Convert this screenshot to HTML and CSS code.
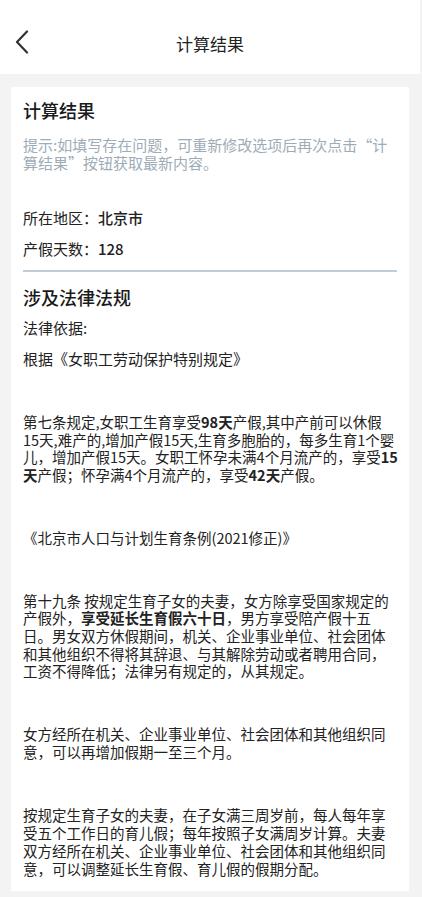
FILE: index.html
```html
<!DOCTYPE html>
<html lang="zh-CN">
<head>
  <meta charset="UTF-8" />
  <meta name="viewport" content="width=device-width, initial-scale=1.0"/>
  <title>计算结果</title>
  <link rel="stylesheet" href="styles.css">
</head>
<body>

  <header class="nav">
    <span class="back">
      <svg width="14" height="24" viewBox="0 0 14 24"><path d="M12 1.5L2 12l10 10.5" fill="none" stroke="#333" stroke-width="2.2" stroke-linecap="round" stroke-linejoin="round"/></svg>
    </span>
    <div class="nav-title">计算结果</div>
  </header>

  <div class="card">
    <h2 class="title">计算结果</h2>
    <p class="hint">提示:如填写存在问题，可重新修改选项后再次点击“计算结果”按钮获取最新内容。</p>

    <p class="row first">所在地区：<b>北京市</b></p>
    <p class="row">产假天数：<b>128</b></p>

    <div class="divider"></div>

    <h2 class="title law">涉及法律法规</h2>
    <p class="row">法律依据:</p>
    <p class="row">根据《女职工劳动保护特别规定》</p>

    <p class="para">第七条规定,女职工生育享受<b>98天</b>产假,其中产前可以休假<br>15天,难产的,增加产假15天,生育多胞胎的，每多生育1个婴<br>儿，增加产假15天。女职工怀孕未满4个月流产的，享受<b>15<br>天</b>产假；怀孕满4个月流产的，享受<b>42天</b>产假。</p>

    <p class="para">《北京市人口与计划生育条例(2021修正)》</p>

    <p class="para">第十九条 按规定生育子女的夫妻，女方除享受国家规定的<br>产假外，<b>享受延长生育假六十日</b>，男方享受陪产假十五<br>日。男女双方休假期间，机关、企业事业单位、社会团体<br>和其他组织不得将其辞退、与其解除劳动或者聘用合同，<br>工资不得降低；法律另有规定的，从其规定。</p>

    <p class="para">女方经所在机关、企业事业单位、社会团体和其他组织同<br>意，可以再增加假期一至三个月。</p>

    <p class="para last">按规定生育子女的夫妻，在子女满三周岁前，每人每年享<br>受五个工作日的育儿假；每年按照子女满周岁计算。夫妻<br>双方经所在机关、企业事业单位、社会团体和其他组织同<br>意，可以调整延长生育假、育儿假的假期分配。</p>
  </div>

</body>
</html>
```

FILE: styles.css
```css
body {
  margin: 0;
  padding: 0;
  background: #f3f3f3;
  font-family: "Noto Sans CJK SC", "Noto Sans", sans-serif;
  color: #222;
  overflow: hidden;
}

.nav {
  position: relative;
  height: 62px;
  padding-top: 12px;
  margin-right: 2px;
  background: #fff;
  display: flex;
  align-items: center;
  justify-content: center;
}

.back {
  position: absolute;
  left: 15px;
  top: 30px;
  height: 24px;
}

.nav-title {
  font-size: 17px;
  color: #222;
}

.card {
  background: #fff;
  margin: 13px 13px 0 11px;
  padding: 11px 10px 14px 12px;
}

.title {
  margin: 0;
  font-size: 18px;
  line-height: 24px;
  font-weight: 500;
  color: #1a1a1a;
}

.hint {
  margin: 14px 2px 0 0;
  font-size: 15px;
  line-height: 18px;
  color: #9eacb8;
}

.row {
  margin: 13px 0 0;
  font-size: 15px;
  line-height: 18px;
}

.row b {
  font-weight: 500;
}

.row.first {
  margin-top: 37px;
}

.divider {
  height: 2px;
  background: #c2ccd4;
  margin: 12px 2px 0 0;
}

.title.law {
  margin-top: 13px;
  margin-bottom: -3px;
}

.para {
  margin: 45px 0 0;
  font-size: 14.5px;
  line-height: 17.7px;
  white-space: nowrap;
}

.para.last {
  margin-top: 46px;
}

.para b {
  font-weight: 700;
}
```
